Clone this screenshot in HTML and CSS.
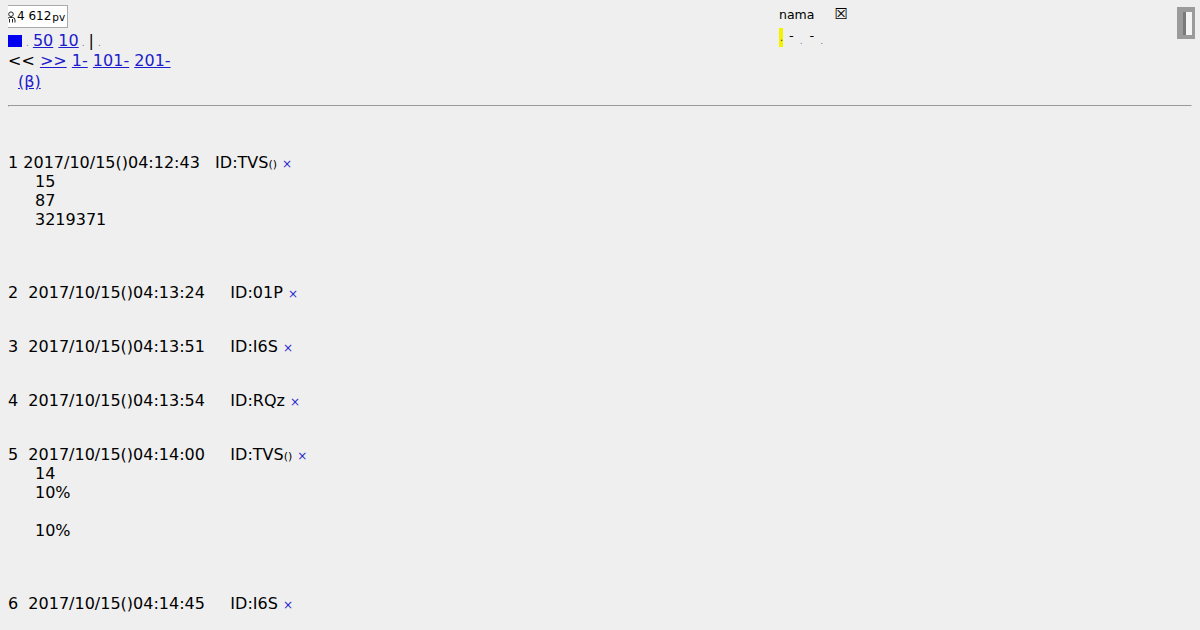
FILE: index.html
```html
<!DOCTYPE html>
<html>
<head>
<meta charset="utf-8">
<link rel="stylesheet" href="styles.css">
</head>
<body>
<div class="top">
  <div class="badge-row"><div class="badge"><svg class="person" viewBox="0 0 10 12" width="10" height="12"><circle cx="5" cy="3.2" r="2.3" fill="none" stroke="#222" stroke-width="1"/><path d="M1 11.5 V9 Q1 6.5 3.5 6.5 H6.5 Q9 6.5 9 9 V11.5 M3.5 8 V11.5 M6.5 8 V11.5" fill="none" stroke="#222" stroke-width="1"/></svg>4 612<span class="pv">pv</span></div></div>
  <div class="navline l2"><a class="sq" href="#"></a><span class="dot">.</span><a href="#">50</a> <a href="#">10</a><span class="dot d2">.</span><span class="bar">|</span><span class="dot">.</span></div>
  <div class="navline l3">&lt;&lt; <a href="#">&gt;&gt;</a> <a href="#">1-</a> <a href="#">101-</a> <a href="#">201-</a></div>
  <div class="navline l4 beta"><a href="#">(β)</a></div>
</div>
<div class="namebox">
  <div class="namerow"><span class="nama">nama</span><span class="xbox">&#x2612;</span></div>
  <div class="namerow2"><span class="hl">.</span><span class="m">-</span><span class="d">.</span><span class="m">-</span><span class="d">.</span></div>
</div>
<div class="scroller"><div class="thumb"></div></div>
<hr class="rule">
<div class="thread">
  <div class="post">
    <div class="head">1 2017/10/15()04:12:43   ID:TVS<span class="sm">()</span> <span class="x">×</span></div>
    <div class="body">15<br>87<br>3219371<br><br></div>
  </div>
  <div class="post">
    <div class="head">2  2017/10/15()04:13:24     ID:01P <span class="x">×</span></div>
  </div>
  <div class="post">
    <div class="head">3  2017/10/15()04:13:51     ID:I6S <span class="x">×</span></div>
  </div>
  <div class="post">
    <div class="head">4  2017/10/15()04:13:54     ID:RQz <span class="x">×</span></div>
  </div>
  <div class="post">
    <div class="head">5  2017/10/15()04:14:00     ID:TVS<span class="sm">()</span> <span class="x">×</span></div>
    <div class="body">14<br>10%<br><br>10%<br><br></div>
  </div>
  <div class="post">
    <div class="head">6  2017/10/15()04:14:45     ID:I6S <span class="x">×</span></div>
  </div>
</div>
</body>
</html>
```
FILE: styles.css
```css
html, body {
  background: #efefef;
}
body {
  margin: 0 8px;
  font-family: "DejaVu Sans", sans-serif;
  font-size: 16px;
  color: #000;
  overflow: hidden;
  height: 630px;
}
a {
  color: #1c1ccc;
}
.top {
  padding-top: 5px;
}
.badge-row {
  height: 26px;
}
.badge {
  display: inline-flex;
  align-items: center;
  margin-left: -6px;
  height: 21px;
  padding: 0 2px 0 3px;
  background: #fff;
  border: 1px solid #aaa;
  font-size: 12px;
  line-height: 21px;
}
.person {
  margin-right: 1px;
}
.pv {
  font-size: 10.5px;
  margin-left: 1px;
  position: relative;
  top: 1px;
}
.navline {
  line-height: 20px;
  white-space: nowrap;
}
.l2 {
  height: 20px;
}
.l3 {
  height: 21px;
}
.l4 {
  height: 19px;
}
.sq {
  display: inline-block;
  width: 14px;
  height: 12px;
  background: #0000ee;
  vertical-align: -1px;
  line-height: 1;
}
.dot {
  color: #6a6ab0;
  font-size: 9px;
  line-height: 1;
  margin: 0 4px 0 4px;
}
.d2 {
  margin: 0 4px 0 3px;
}
.beta {
  padding-left: 10px;
}
.namebox {
  position: absolute;
  left: 779px;
  top: 6px;
  font-size: 12.5px;
}
.namerow {
  display: flex;
  align-items: center;
  height: 16px;
}
.xbox {
  margin-left: 20px;
  font-size: 15px;
  line-height: 14px;
}
.namerow2 {
  display: flex;
  align-items: flex-end;
  margin-top: 6px;
  height: 19px;
}
.hl {
  display: inline-block;
  width: 4px;
  height: 19px;
  background: #f3f300;
  font-size: 10px;
  line-height: 19px;
  overflow: hidden;
  margin-right: 6px;
  color: #333;
  text-indent: 1px;
}
.namerow2 .m {
  font-size: 13px;
  line-height: 1;
  margin: 0 6px 5px 0;
}
.namerow2 .d {
  font-size: 9px;
  line-height: 1;
  color: #6a6ab0;
  margin: 0 7px 1px 0;
}
.scroller {
  position: absolute;
  left: 1177px;
  top: 7px;
  width: 18px;
  height: 32px;
  background: #9b9b9b;
  box-sizing: border-box;
  padding: 5px 5px 4px 5px;
}
.thumb {
  height: 100%;
  background: #f4f4f4;
  border-left: 3px solid #7a7a7a;
  box-sizing: border-box;
  width: 9px;
  margin-left: 1px;
}
.rule {
  margin: 14px 0 0 0;
}
.thread {
  padding-top: 46px;
}
.post {
  margin-bottom: 35px;
  line-height: 19px;
}
.head {
  white-space: pre;
  height: 19px;
}
.sm {
  font-size: 11px;
  line-height: 1;
}
.x {
  color: #2a2acc;
  font-size: 12px;
  line-height: 1;
}
.body {
  padding-left: 27px;
}
```
